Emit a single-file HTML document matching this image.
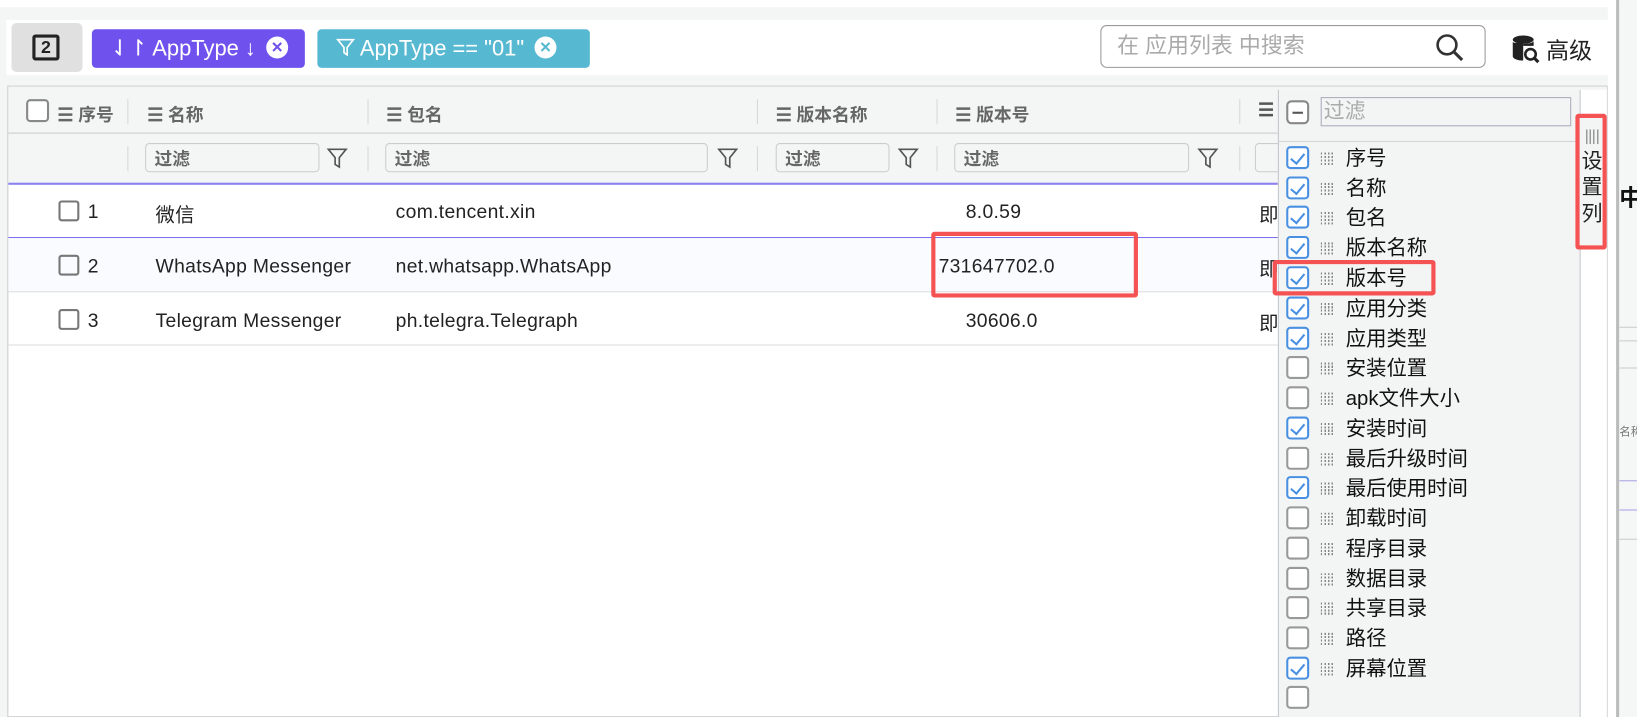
<!DOCTYPE html>
<html><head><meta charset="utf-8"><style>
*{box-sizing:border-box;margin:0;padding:0}
body{width:1637px;height:687px;overflow:hidden;background:#f4f5f5;font-family:"Liberation Sans","Noto Sans CJK SC",sans-serif;position:relative;color:#222}
#w{position:absolute;left:0;top:0;width:1568px;height:658px;transform:scale(1.04401);transform-origin:0 0}
.a{position:absolute}
.topw{left:0;top:0;width:1548px;height:7px;background:#fff}
.tb{left:6px;top:19px;width:1534px;height:53px;background:#fff}
.chip{height:37px;top:28px;border-radius:4px;color:#fff;font-size:21px;line-height:37px;padding-left:18px;white-space:nowrap}
.x{display:inline-block;width:21px;height:21px;border-radius:50%;background:#fff;vertical-align:middle;position:relative;top:-2px;margin-left:10px}
.x:before,.x:after{content:"";position:absolute;left:5px;top:9.5px;width:11px;height:2px;background:currentColor;transform:rotate(45deg)}
.x:after{transform:rotate(-45deg)}
.tbl{left:7px;top:82px;width:1533px;height:605px;background:#fff;border:1px solid #c8cbce}
.hdr{left:8px;top:83px;width:1531px;height:92px;background:#f4f5f5}
.hl{height:1px;background:#c8cbce;left:8px;width:1531px}
.ht{font-size:17px;font-weight:bold;color:#666;top:96px;white-space:nowrap}
.sep{width:1px;background:#d6d8da;height:24px}
.fi{top:137px;height:28px;border:1px solid #ccc;border-radius:4px;background:#f4f5f5;font-size:17px;font-weight:bold;color:#666;padding:3px 0 0 8px;line-height:24px}
.cb{width:22px;height:22px;border:2px solid #888;border-radius:4px;background:#fff}
.cbs{width:20px;height:20px;border:2px solid #777;border-radius:3px}
.row{font-size:18.5px;color:#222;white-space:nowrap;letter-spacing:0.3px}
.pan{left:1224px;top:86px;width:289px;height:601px;background:#f3f5f4;border-left:1px solid #c2c6ca}
.it{left:1232px;font-size:19.5px;white-space:nowrap;height:24px}
.it .c{position:absolute;left:0;top:0;width:22px;height:22px;border:2px solid #999;border-radius:4px;background:#fff}
.it .c.on{border-color:#4a90e2}
.it .c.on:after{content:"";position:absolute;left:5px;top:2px;width:6px;height:11px;border:solid #4a90e2;border-width:0 2px 2px 0;transform:rotate(40deg)}
.it .g{position:absolute;left:33px;top:6px;width:13px;height:12px;background:repeating-linear-gradient(90deg,#888 0 1.5px,transparent 1.5px 3.5px);-webkit-mask:repeating-linear-gradient(180deg,#000 0 2px,transparent 2px 3.3px)}
.it span{position:absolute;left:57px;top:-5px;color:#111}
.red{border:4px solid #f55353;border-radius:3px}
</style></head><body><div id="w">
<div class="a topw"></div>
<div class="a tb"></div>
<div class="a" style="left:11px;top:22px;width:68px;height:47px;background:#e0e0e0;border-radius:5px"></div>
<div class="a" style="left:31px;top:33px;width:26px;height:25px;border:3px solid #222;border-radius:3px;font-size:17px;font-weight:bold;text-align:center;line-height:19px">2</div>
<div class="a chip" style="left:88px;width:204px;background:#6f52ed">⇃↾ AppType ↓<span class="x" style="color:#6f52ed"></span></div>
<div class="a chip" style="left:304px;width:261px;background:#57b8d2"><svg width="18" height="18" viewBox="0 0 18 18" style="vertical-align:middle;position:relative;top:-2px"><path d="M1.5 2h15l-6 7.5v7l-3-2v-5z" fill="none" stroke="#fff" stroke-width="1.6"/></svg> AppType == "01"<span class="x" style="color:#57b8d2"></span></div>
<div class="a" style="left:1054px;top:24px;width:369px;height:41px;border:1px solid #999;border-radius:6px;background:#fff;font-size:21px;color:#aaa;line-height:39px;padding-left:15px">在 应用列表 中搜索</div>
<svg class="a" style="left:1374px;top:31px" width="30" height="30" viewBox="0 0 30 30"><circle cx="12" cy="12" r="9" fill="none" stroke="#333" stroke-width="2.5"/><path d="M18.5 18.5l8 8" stroke="#333" stroke-width="3"/></svg>
<svg class="a" style="left:1448px;top:33px" width="28" height="30" viewBox="0 0 28 30"><ellipse cx="11" cy="5" rx="10" ry="4" fill="#222"/><path d="M1 7v14c0 2 4 4 10 4V7C5 9 1 8 1 7z" fill="#222"/><path d="M11 9c5 0 10-1 10-3v5H11z" fill="#222"/><circle cx="18" cy="19" r="5" fill="#fff" stroke="#222" stroke-width="2.5"/><path d="M21.5 22.5l4 4" stroke="#222" stroke-width="3"/></svg>
<div class="a" style="left:1481px;top:31px;font-size:22px;color:#222">高级</div>

<div class="a tbl"></div>
<div class="a hdr"></div>
<div class="a hl" style="top:127px"></div>
<div class="a" style="left:8px;top:175px;width:1216px;height:2px;background:#8a80ee"></div>
<div class="a" style="left:8px;top:228px;width:1216px;height:51px;background:#fafbfe"></div>
<div class="a" style="left:8px;top:227px;width:1216px;height:1px;background:#7a70f0"></div>
<div class="a" style="left:8px;top:279px;width:1216px;height:1px;background:#ddd"></div>
<div class="a" style="left:8px;top:330px;width:1216px;height:1px;background:#ddd"></div>

<div class="a cb" style="left:25px;top:95px"></div>
<div class="a ht" style="left:55px">☰ 序号</div>
<div class="a sep" style="left:122px;top:95px"></div>
<div class="a ht" style="left:141px">☰ 名称</div>
<div class="a sep" style="left:352px;top:95px"></div>
<div class="a ht" style="left:370px">☰ 包名</div>
<div class="a sep" style="left:725px;top:95px"></div>
<div class="a ht" style="left:743px">☰ 版本名称</div>
<div class="a sep" style="left:897px;top:95px"></div>
<div class="a ht" style="left:915px">☰ 版本号</div>
<div class="a sep" style="left:1187px;top:95px"></div>
<div class="a ht" style="left:1205px;color:#555">☰</div>

<div class="a sep" style="left:122px;top:140px"></div>
<div class="a fi" style="left:139px;width:167px">过滤</div>
<div class="a fi" style="left:369px;width:309px">过滤</div>
<div class="a fi" style="left:743px;width:109px">过滤</div>
<div class="a fi" style="left:914px;width:225px">过滤</div>
<div class="a fi" style="left:1202px;width:30px"></div>
<svg class="a" style="left:313px;top:141px" width="20" height="22" viewBox="0 0 20 22"><path d="M1.5 2h17l-6.5 8v9l-4-2.5V10z" fill="none" stroke="#555" stroke-width="1.6"/></svg>
<div class="a sep" style="left:352px;top:140px"></div>
<svg class="a" style="left:687px;top:141px" width="20" height="22" viewBox="0 0 20 22"><path d="M1.5 2h17l-6.5 8v9l-4-2.5V10z" fill="none" stroke="#555" stroke-width="1.6"/></svg>
<div class="a sep" style="left:725px;top:140px"></div>
<svg class="a" style="left:860px;top:141px" width="20" height="22" viewBox="0 0 20 22"><path d="M1.5 2h17l-6.5 8v9l-4-2.5V10z" fill="none" stroke="#555" stroke-width="1.6"/></svg>
<div class="a sep" style="left:897px;top:140px"></div>
<svg class="a" style="left:1147px;top:141px" width="20" height="22" viewBox="0 0 20 22"><path d="M1.5 2h17l-6.5 8v9l-4-2.5V10z" fill="none" stroke="#555" stroke-width="1.6"/></svg>
<div class="a sep" style="left:1187px;top:140px"></div>

<div class="a cbs" style="left:56px;top:192px"></div><div class="a row" style="left:84px;top:192px">1</div>
<div class="a row" style="left:149px;top:192px">微信</div>
<div class="a row" style="left:379px;top:192px">com.tencent.xin</div>
<div class="a row" style="left:925px;top:192px">8.0.59</div>
<div class="a row" style="left:1206px;top:192px">即</div>
<div class="a cbs" style="left:56px;top:244px"></div><div class="a row" style="left:84px;top:244px">2</div>
<div class="a row" style="left:149px;top:244px">WhatsApp Messenger</div>
<div class="a row" style="left:379px;top:244px">net.whatsapp.WhatsApp</div>
<div class="a row" style="left:899px;top:244px">731647702.0</div>
<div class="a row" style="left:1206px;top:244px">即</div>
<div class="a cbs" style="left:56px;top:296px"></div><div class="a row" style="left:84px;top:296px">3</div>
<div class="a row" style="left:149px;top:296px">Telegram Messenger</div>
<div class="a row" style="left:379px;top:296px">ph.telegra.Telegraph</div>
<div class="a row" style="left:925px;top:296px">30606.0</div>
<div class="a row" style="left:1206px;top:296px">即</div>

<div class="a pan"></div>
<div class="a" style="left:1232px;top:96px;width:22px;height:23px;border:2px solid #888;border-radius:5px;background:#fff"><div style="position:absolute;left:4px;top:9px;width:10px;height:1.5px;background:#555"></div></div>
<div class="a" style="left:1265px;top:93px;width:240px;height:28px;border:1px solid #aab;background:#f3f5f4;font-size:20px;color:#aaa;line-height:26px;padding-left:2px">过滤</div>
<div class="a" style="left:1225px;top:135px;width:288px;height:1px;background:#d0d3d6"></div>

<div class="a it" style="top:140px"><div class="c on"></div><div class="g"></div><span>序号</span></div>
<div class="a it" style="top:169px"><div class="c on"></div><div class="g"></div><span>名称</span></div>
<div class="a it" style="top:197px"><div class="c on"></div><div class="g"></div><span>包名</span></div>
<div class="a it" style="top:226px"><div class="c on"></div><div class="g"></div><span>版本名称</span></div>
<div class="a it" style="top:255px"><div class="c on"></div><div class="g"></div><span>版本号</span></div>
<div class="a it" style="top:284px"><div class="c on"></div><div class="g"></div><span>应用分类</span></div>
<div class="a it" style="top:313px"><div class="c on"></div><div class="g"></div><span>应用类型</span></div>
<div class="a it" style="top:341px"><div class="c"></div><div class="g"></div><span>安装位置</span></div>
<div class="a it" style="top:370px"><div class="c"></div><div class="g"></div><span>apk文件大小</span></div>
<div class="a it" style="top:399px"><div class="c on"></div><div class="g"></div><span>安装时间</span></div>
<div class="a it" style="top:428px"><div class="c"></div><div class="g"></div><span>最后升级时间</span></div>
<div class="a it" style="top:456px"><div class="c on"></div><div class="g"></div><span>最后使用时间</span></div>
<div class="a it" style="top:485px"><div class="c"></div><div class="g"></div><span>卸载时间</span></div>
<div class="a it" style="top:514px"><div class="c"></div><div class="g"></div><span>程序目录</span></div>
<div class="a it" style="top:543px"><div class="c"></div><div class="g"></div><span>数据目录</span></div>
<div class="a it" style="top:571px"><div class="c"></div><div class="g"></div><span>共享目录</span></div>
<div class="a it" style="top:600px"><div class="c"></div><div class="g"></div><span>路径</span></div>
<div class="a it" style="top:629px"><div class="c on"></div><div class="g"></div><span>屏幕位置</span></div>
<div class="a it" style="top:657px"><div class="c"></div></div>

<div class="a" style="left:1513px;top:86px;width:26px;height:601px;background:#fff;border-left:1px solid #c2c6ca"></div>
<div class="a" style="left:1513px;top:113px;width:24px;height:122px;background:#f3f5f4"></div>
<div class="a" style="left:1519px;top:124px;width:14px;height:14px;background:repeating-linear-gradient(90deg,#999 0 1.5px,transparent 1.5px 3.5px)"></div>
<div class="a" style="left:1515px;top:143px;font-size:20px;line-height:25px;width:22px;color:#222">设<br>置<br>列</div>
<div class="a red" style="left:1509px;top:109px;width:30px;height:130px"></div>
<div class="a red" style="left:892px;top:222px;width:198px;height:63px"></div>
<div class="a red" style="left:1219px;top:249px;width:156px;height:34px"></div>

<div class="a" style="left:1540px;top:0;width:8px;height:687px;background:#fff"></div>
<div class="a" style="left:1548px;top:0;width:3px;height:687px;background:#bbb"></div>
<div class="a" style="left:1551px;top:0;width:86px;height:687px;background:#f5f6f6;overflow:hidden">
<div class="a" style="left:0;top:172px;font-size:22px;font-weight:bold;color:#111">中</div>
<div class="a" style="left:0;top:313px;width:86px;height:1px;background:#ccc"></div>
<div class="a" style="left:0;top:326px;width:86px;height:1px;background:#ccc"></div>
<div class="a" style="left:0;top:352px;width:86px;height:1px;background:#ccc"></div>
<div class="a" style="left:0;top:405px;font-size:11px;color:#777;white-space:nowrap">名称</div>
<div class="a" style="left:0;top:460px;width:86px;height:1px;background:#a9a3e6"></div>
<div class="a" style="left:0;top:488px;width:86px;height:1px;background:#a9a3e6"></div>
<div class="a" style="left:0;top:516px;width:86px;height:1px;background:#ccc"></div>
</div>
</div></body></html>
